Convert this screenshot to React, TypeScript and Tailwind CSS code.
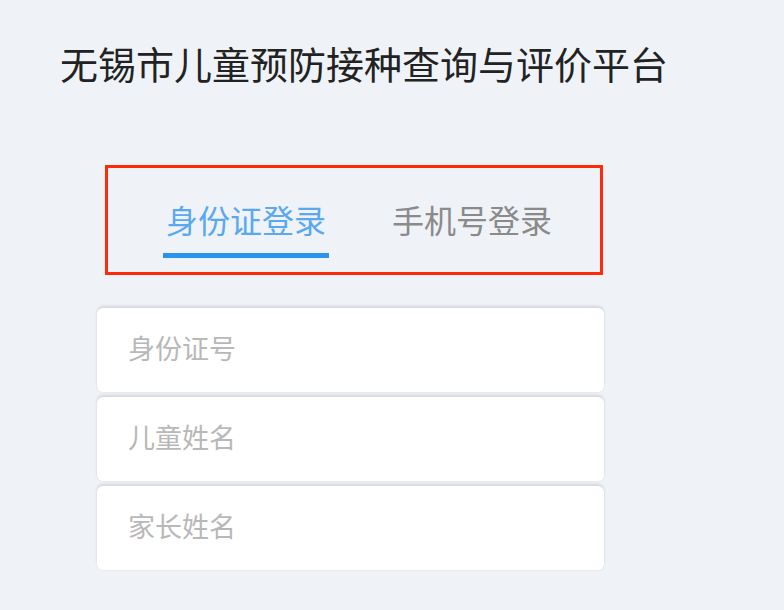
import { useState } from 'react';

const font = { fontFamily: '"Noto Sans CJK SC", "Noto Sans", sans-serif' };

export default function App() {
    const [tab, setTab] = useState(0);
    const tabs = ['身份证登录', '手机号登录'];
    const fields = ['身份证号', '儿童姓名', '家长姓名'];

    return (
        <div className="min-h-screen w-full bg-[#eff3f8]" style={font}>
            <div className="pt-[39px] pl-[60px]">
                <h1 className="text-[38px] leading-[48px] font-normal text-[#222222]">
                    无锡市儿童预防接种查询与评价平台
                </h1>
            </div>

            {/* login type tabs */}
            <div className="ml-[105px] mt-[78px] w-[498px] h-[110px] border-[3px] border-[#ff2a0a] flex pl-[55px] gap-[60px] pt-[31px]">
                {tabs.map((t, i) => (
                    <button
                        key={t}
                        onClick={() => setTab(i)}
                        className="w-[166px] flex flex-col items-center"
                    >
                        <span
                            className={
                                'text-[32px] leading-[40px] ' +
                                (tab === i ? 'text-[#59a8f0]' : 'text-[#8a8a8a]')
                            }
                        >
                            {t}
                        </span>
                        <span
                            className={
                                'mt-[14px] h-[5px] w-full ' +
                                (tab === i ? 'bg-[#2a93ee]' : 'bg-transparent')
                            }
                        />
                    </button>
                ))}
            </div>

            {/* form fields */}
            <div className="ml-[97px] mt-[33px] w-[507px] flex flex-col gap-[5px]">
                {fields.map((f) => (
                    <div
                        key={f}
                        className="h-[84px] bg-white rounded-md shadow-[0_-2px_3px_rgba(0,0,0,0.12),0_1px_2px_rgba(0,0,0,0.04)] flex items-center px-[31px] pb-[4px]"
                    >
                        <input
                            placeholder={f}
                            className="w-full bg-transparent outline-none text-[27px] text-[#333] placeholder:text-[#b8b8b8]"
                            style={font}
                        />
                    </div>
                ))}
            </div>
        </div>
    );
}
